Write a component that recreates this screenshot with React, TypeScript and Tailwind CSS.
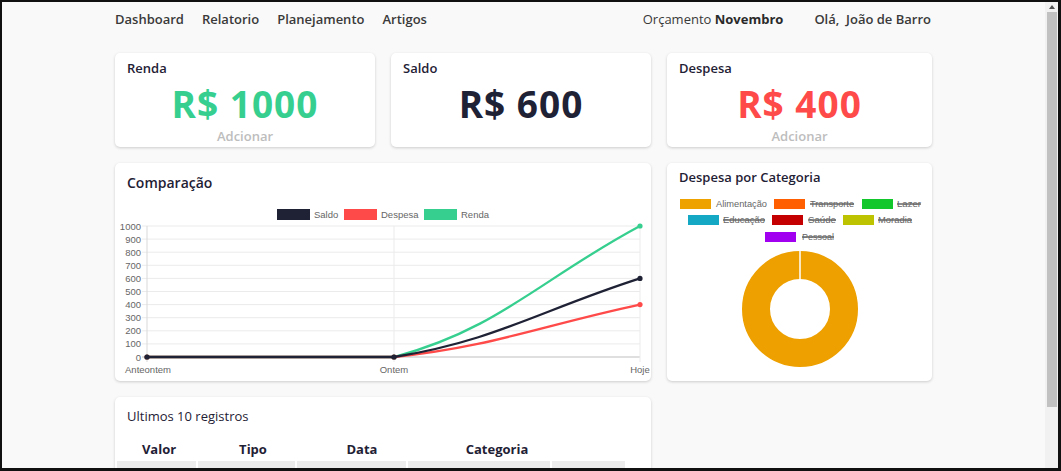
import React from "react";

const font = "font-['Open_Sans','Noto_Sans',sans-serif]";

function LineChart() {
  const y = (v: number) => 160 - v * 0.131;
  const x0 = 32, x1 = 279, x2 = 525;
  const ticks = [0, 100, 200, 300, 400, 500, 600, 700, 800, 900, 1000];
  const curve = (v: number) => {
    const yb = y(0);
    const ye = y(v);
    const d12 = Math.hypot(x2 - x1, ye - yb);
    const d01 = x1 - x0;
    const fb = (d12 / (d01 + d12)) * 0.4;
    const c1x = x1 + fb * (x2 - x0);
    const c1y = yb + fb * (ye - yb);
    const c2x = x2 - 0.4 * (x2 - x1);
    const c2y = ye - 0.4 * (ye - yb);
    return `M${x0} ${yb} L${x1} ${yb} C${c1x} ${c1y} ${c2x} ${c2y} ${x2} ${ye}`;
  };
  const series = [
    { v: 1000, c: "#36cf8f" },
    { v: 400, c: "#ff4a4a" },
    { v: 600, c: "#1f2135" },
  ];
  return (
    <svg width="536" height="182" className="block" style={{ fontFamily: "'Liberation Sans', Arial, sans-serif" }}>
      <rect x="162" y="12" width="33" height="11" fill="#1f2135" />
      <text x="199" y="21" fontSize="9.5" fill="#666">Saldo</text>
      <rect x="229" y="12" width="33" height="11" fill="#ff4a4a" />
      <text x="266" y="21" fontSize="9.5" fill="#666">Despesa</text>
      <rect x="309" y="12" width="33" height="11" fill="#36cf8f" />
      <text x="346" y="21" fontSize="9.5" fill="#666">Renda</text>
      {ticks.map((t) => (
        <g key={t}>
          <line x1="27" x2={x2} y1={y(t)} y2={y(t)} stroke={t === 0 ? "#bfbfbf" : "#ebebeb"} strokeWidth="1" />
          <text x="26" y={y(t) + 3.5} fontSize="9.5" fill="#666" textAnchor="end">{t}</text>
        </g>
      ))}
      {[x0, x1, x2].map((gx, i) => (
        <line key={i} x1={gx} x2={gx} y1={y(1000)} y2={165} stroke={i === 0 ? "#d9d9d9" : "#ebebeb"} strokeWidth="1" />
      ))}
      <text x={x0 + 1} y="176" fontSize="9.5" fill="#666" textAnchor="middle">Anteontem</text>
      <text x={x1} y="176" fontSize="9.5" fill="#666" textAnchor="middle">Ontem</text>
      <text x={x2} y="176" fontSize="9.5" fill="#666" textAnchor="middle">Hoje</text>
      {series.map((s) => (
        <g key={s.v}>
          <path d={curve(s.v)} fill="none" stroke={s.c} strokeWidth="2.3" />
          <circle cx={x0} cy={y(0)} r="2.6" fill={s.c} />
          <circle cx={x1} cy={y(0)} r="2.6" fill={s.c} />
          <circle cx={x2} cy={y(s.v)} r="2.6" fill={s.c} />
        </g>
      ))}
    </svg>
  );
}

function Donut() {
  const items = [
    { l: "Alimentação", c: "#eda200", bx: 13, tx: 49, cy: 14, w: 51, s: false },
    { l: "Transporte", c: "#ff5f00", bx: 107, tx: 143, cy: 14, w: 44, s: true },
    { l: "Lazer", c: "#12c72c", bx: 195, tx: 230, cy: 14, w: 24, s: true },
    { l: "Educação", c: "#15a8c5", bx: 21, tx: 56, cy: 30, w: 42, s: true },
    { l: "Saúde", c: "#c40000", bx: 105, tx: 141, cy: 30, w: 28, s: true },
    { l: "Moradia", c: "#bdc300", bx: 176, tx: 211, cy: 30, w: 34, s: true },
    { l: "Pessoal", c: "#a100f0", bx: 98, tx: 135, cy: 47, w: 32, s: true },
  ];
  const cx = 133, cy = 119, R = 58, r = 30;
  return (
    <svg width="265" height="192" className="block" style={{ fontFamily: "'Liberation Sans', Arial, sans-serif" }}>
      {items.map((it) => (
        <g key={it.l}>
          <rect x={it.bx} y={it.cy - 5} width="31" height="10" fill={it.c} />
          <text x={it.tx} y={it.cy + 3.3} fontSize="9.5" fill="#666" textLength={it.w} lengthAdjust="spacingAndGlyphs">
            {it.l}
          </text>
          {it.s && (
            <line x1={it.tx} x2={it.tx + it.w} y1={it.cy} y2={it.cy} stroke="#666" strokeWidth="1.3" />
          )}
        </g>
      ))}
      <circle cx={cx} cy={cy} r={(R + r) / 2} fill="none" stroke="#eda000" strokeWidth={R - r} />
      <line x1={cx} x2={cx} y1={cy - R - 1} y2={cy - r + 1} stroke="#fff" strokeWidth="1.5" />
    </svg>
  );
}

export default function App() {
  return (
    <div className={`w-[1061px] h-[471px] flex bg-[#f9f9f9] border-t-2 border-l-2 border-b-[3px] border-r-[3px] border-[#111] overflow-hidden ${font}`}>
      <div className="flex-1 overflow-hidden">
        <div className="w-[817px] mx-auto">
          <nav className="h-[36px] flex items-center text-[13px] text-[#3a3a3a] font-semibold">
            <div className="flex gap-[18px]">
              <span>Dashboard</span>
              <span>Relatorio</span>
              <span>Planejamento</span>
              <span>Artigos</span>
            </div>
            <div className="ml-auto flex gap-[31px] pr-[1px]">
              <span className="font-medium">
                Orçamento <span className="font-bold text-[#2a2a2a]">Novembro</span>
              </span>
              <span>Olá,&nbsp; João de Barro</span>
            </div>
          </nav>

          <div className="mt-[15px] grid grid-cols-[260px_260px_1fr] gap-x-4 gap-y-4">
            <div className="h-[94px] bg-white rounded-[5px] shadow-[0_1px_3px_rgba(0,0,0,0.18)] px-3 pt-[5px]">
              <div className="text-[13px] leading-[20px] font-semibold text-[#1f2135]">Renda</div>
              <div className="mt-[6px] text-center text-[37px] leading-[40px] font-bold tracking-[1px] text-[#36cf8f]">R$ 1000</div>
              <div className="mt-[4px] text-center text-[13px] leading-[16px] font-semibold text-[#bdbdbd]">Adcionar</div>
            </div>
            <div className="h-[94px] bg-white rounded-[5px] shadow-[0_1px_3px_rgba(0,0,0,0.18)] px-3 pt-[5px]">
              <div className="text-[13px] leading-[20px] font-semibold text-[#1f2135]">Saldo</div>
              <div className="mt-[6px] text-center text-[37px] leading-[40px] font-bold tracking-[1px] text-[#1f2135]">R$ 600</div>
            </div>
            <div className="h-[94px] bg-white rounded-[5px] shadow-[0_1px_3px_rgba(0,0,0,0.18)] px-3 pt-[5px]">
              <div className="text-[13px] leading-[20px] font-semibold text-[#1f2135]">Despesa</div>
              <div className="mt-[6px] text-center text-[37px] leading-[40px] font-bold tracking-[1px] text-[#ff4a4a]">R$ 400</div>
              <div className="mt-[4px] text-center text-[13px] leading-[16px] font-semibold text-[#bdbdbd]">Adcionar</div>
            </div>

            <div className="col-span-2 h-[218px] bg-white rounded-[5px] shadow-[0_1px_3px_rgba(0,0,0,0.18)] pt-[10px]">
              <div className="px-3 text-[14px] leading-[20px] font-semibold text-[#1f2135]">Comparação</div>
              <div className="mt-[4px]">
                <LineChart />
              </div>
            </div>
            <div className="h-[218px] bg-white rounded-[5px] shadow-[0_1px_3px_rgba(0,0,0,0.18)] pt-[4px] overflow-hidden">
              <div className="px-3 text-[13px] leading-[20px] font-semibold text-[#1f2135]">Despesa por Categoria</div>
              <div className="mt-[3px]">
                <Donut />
              </div>
            </div>

            <div className="col-span-2 h-[120px] bg-white rounded-[5px] shadow-[0_1px_3px_rgba(0,0,0,0.18)] pt-[9px]">
              <div className="px-3 text-[13px] leading-[20px] font-medium text-[#1f2135]">Ultimos 10 registros</div>
              <div className="mt-[13px] grid grid-cols-[84px_104px_114px_156px] ml-[2px] text-[13px] leading-[20px] font-bold text-[#1f2135] text-center">
                <span>Valor</span>
                <span>Tipo</span>
                <span>Data</span>
                <span>Categoria</span>
              </div>
              <div className="mt-[2px] ml-[2px] flex gap-[2px] text-[12px] leading-[20px] text-center">
                <div className="w-[79px] bg-[#ececec] pt-[3px] text-[#333]">20.000</div>
                <div className="w-[97px] bg-[#ececec] pt-[3px] text-[#ff4a4a]">Despesa</div>
                <div className="w-[109px] bg-[#ececec] pt-[3px] text-[#333]">20/11/2022</div>
                <div className="w-[142px] bg-[#ececec] pt-[3px] text-[#333]">Alimentação</div>
                <div className="w-[73px] bg-[#ececec] pt-[3px] text-[#aaa]">Excluir</div>
              </div>
            </div>
          </div>
        </div>
      </div>
      <div className="w-[13px] bg-[#f1f1f1] flex flex-col items-center">
        <div className="mt-[3px] w-0 h-0 border-l-[3px] border-r-[3px] border-b-[4px] border-l-transparent border-r-transparent border-b-[#505050]" />
        <div className="mt-[3px] w-[10px] h-[395px] bg-[#c1c1c1]" />
      </div>
    </div>
  );
}
